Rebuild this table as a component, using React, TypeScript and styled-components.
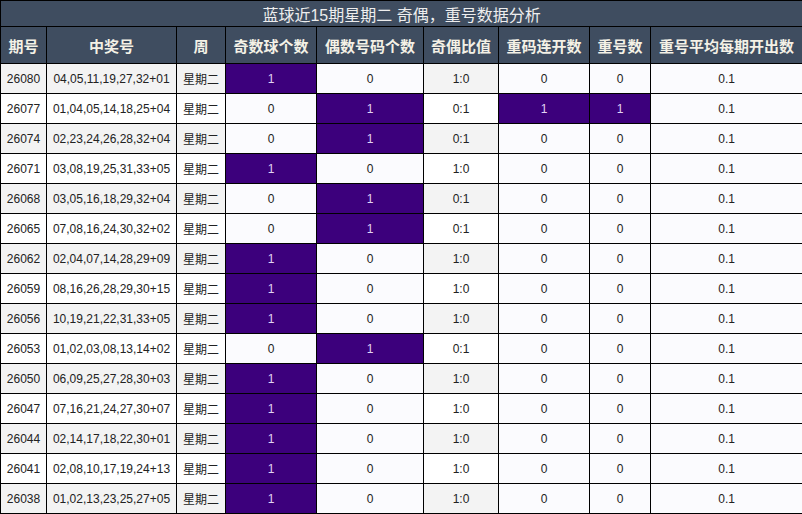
import * as React from "react";
import styled, { createGlobalStyle } from "styled-components";

const GlobalStyle = createGlobalStyle`
  html, body {
    margin: 0;
    padding: 0;
    background: #ffffff;
  }
  body {
    font-family: "Liberation Sans", "Noto Sans CJK SC", Arial, sans-serif;
  }
`;

interface Draw {
  issue: string;
  balls: string;
  odd: number;
  even: number;
  repeatRun: number;
  repeat: number;
}

const draws: Draw[] = [
  { issue: "26080", balls: "04,05,11,19,27,32+01", odd: 1, even: 0, repeatRun: 0, repeat: 0 },
  { issue: "26077", balls: "01,04,05,14,18,25+04", odd: 0, even: 1, repeatRun: 1, repeat: 1 },
  { issue: "26074", balls: "02,23,24,26,28,32+04", odd: 0, even: 1, repeatRun: 0, repeat: 0 },
  { issue: "26071", balls: "03,08,19,25,31,33+05", odd: 1, even: 0, repeatRun: 0, repeat: 0 },
  { issue: "26068", balls: "03,05,16,18,29,32+04", odd: 0, even: 1, repeatRun: 0, repeat: 0 },
  { issue: "26065", balls: "07,08,16,24,30,32+02", odd: 0, even: 1, repeatRun: 0, repeat: 0 },
  { issue: "26062", balls: "02,04,07,14,28,29+09", odd: 1, even: 0, repeatRun: 0, repeat: 0 },
  { issue: "26059", balls: "08,16,26,28,29,30+15", odd: 1, even: 0, repeatRun: 0, repeat: 0 },
  { issue: "26056", balls: "10,19,21,22,31,33+05", odd: 1, even: 0, repeatRun: 0, repeat: 0 },
  { issue: "26053", balls: "01,02,03,08,13,14+02", odd: 0, even: 1, repeatRun: 0, repeat: 0 },
  { issue: "26050", balls: "06,09,25,27,28,30+03", odd: 1, even: 0, repeatRun: 0, repeat: 0 },
  { issue: "26047", balls: "07,16,21,24,27,30+07", odd: 1, even: 0, repeatRun: 0, repeat: 0 },
  { issue: "26044", balls: "02,14,17,18,22,30+01", odd: 1, even: 0, repeatRun: 0, repeat: 0 },
  { issue: "26041", balls: "02,08,10,17,19,24+13", odd: 1, even: 0, repeatRun: 0, repeat: 0 },
  { issue: "26038", balls: "01,02,13,23,25,27+05", odd: 1, even: 0, repeatRun: 0, repeat: 0 },
];

const columns = [
  { title: "期号", width: 46 },
  { title: "中奖号", width: 130 },
  { title: "周", width: 49 },
  { title: "奇数球个数", width: 91 },
  { title: "偶数号码个数", width: 107 },
  { title: "奇偶比值", width: 75 },
  { title: "重码连开数", width: 91 },
  { title: "重号数", width: 61 },
  { title: "重号平均每期开出数", width: 152 },
];

export default function App() {
  return (
    <>
      <GlobalStyle />
      <Table>
        <colgroup>
          {columns.map((c) => (
            <col key={c.title} style={{ width: c.width }} />
          ))}
        </colgroup>
        <thead>
          <tr>
            <Title colSpan={columns.length}>蓝球近15期星期二 奇偶，重号数据分析</Title>
          </tr>
          <tr>
            {columns.map((c) => (
              <HeadCell key={c.title}>{c.title}</HeadCell>
            ))}
          </tr>
        </thead>
        <tbody>
          {draws.map((d) => (
            <Row key={d.issue}>
              <Striped>{d.issue}</Striped>
              <Striped>{d.balls}</Striped>
              <Striped>星期二</Striped>
              <Cell $hit={d.odd > 0}>{d.odd}</Cell>
              <Cell $hit={d.even > 0}>{d.even}</Cell>
              <Striped>{d.odd}:{d.even}</Striped>
              <Cell $hit={d.repeatRun > 0}>{d.repeatRun}</Cell>
              <Cell $hit={d.repeat > 0}>{d.repeat}</Cell>
              <Cell>0.1</Cell>
            </Row>
          ))}
        </tbody>
      </Table>
    </>
  );
}

const Table = styled.table`
  width: 802px;
  table-layout: fixed;
  border-collapse: collapse;
  border: 1px solid #000;
`;

const Title = styled.th`
  height: 25px;
  padding: 0;
  background: #3f4d60;
  color: #eeeeee;
  font-size: 16px;
  font-weight: normal;
  text-align: center;
  border: 1px solid #000;
`;

const HeadCell = styled.th`
  height: 36px;
  padding: 0;
  background: #3f4d60;
  color: #f4f1e6;
  font-size: 15px;
  font-weight: bold;
  text-align: center;
  white-space: nowrap;
  border: 1px solid #000;
`;

const Row = styled.tr`
  &:nth-child(odd) td.striped {
    background: #f3f3f3;
  }
`;

const Cell = styled.td<{ $hit?: boolean }>`
  height: 29px;
  padding: 0;
  text-align: center;
  font-size: 12px;
  white-space: nowrap;
  color: ${(p) => (p.$hit ? "#e0d4f4" : "#222222")};
  background: ${(p) => (p.$hit ? "#3c007c" : "#fbfbfe")};
  border: 1px solid #000;
`;

const Striped = styled.td.attrs({ className: "striped" })`
  height: 29px;
  padding: 0;
  text-align: center;
  font-size: 12px;
  white-space: nowrap;
  color: #222222;
  background: #ffffff;
  border: 1px solid #000;
`;
